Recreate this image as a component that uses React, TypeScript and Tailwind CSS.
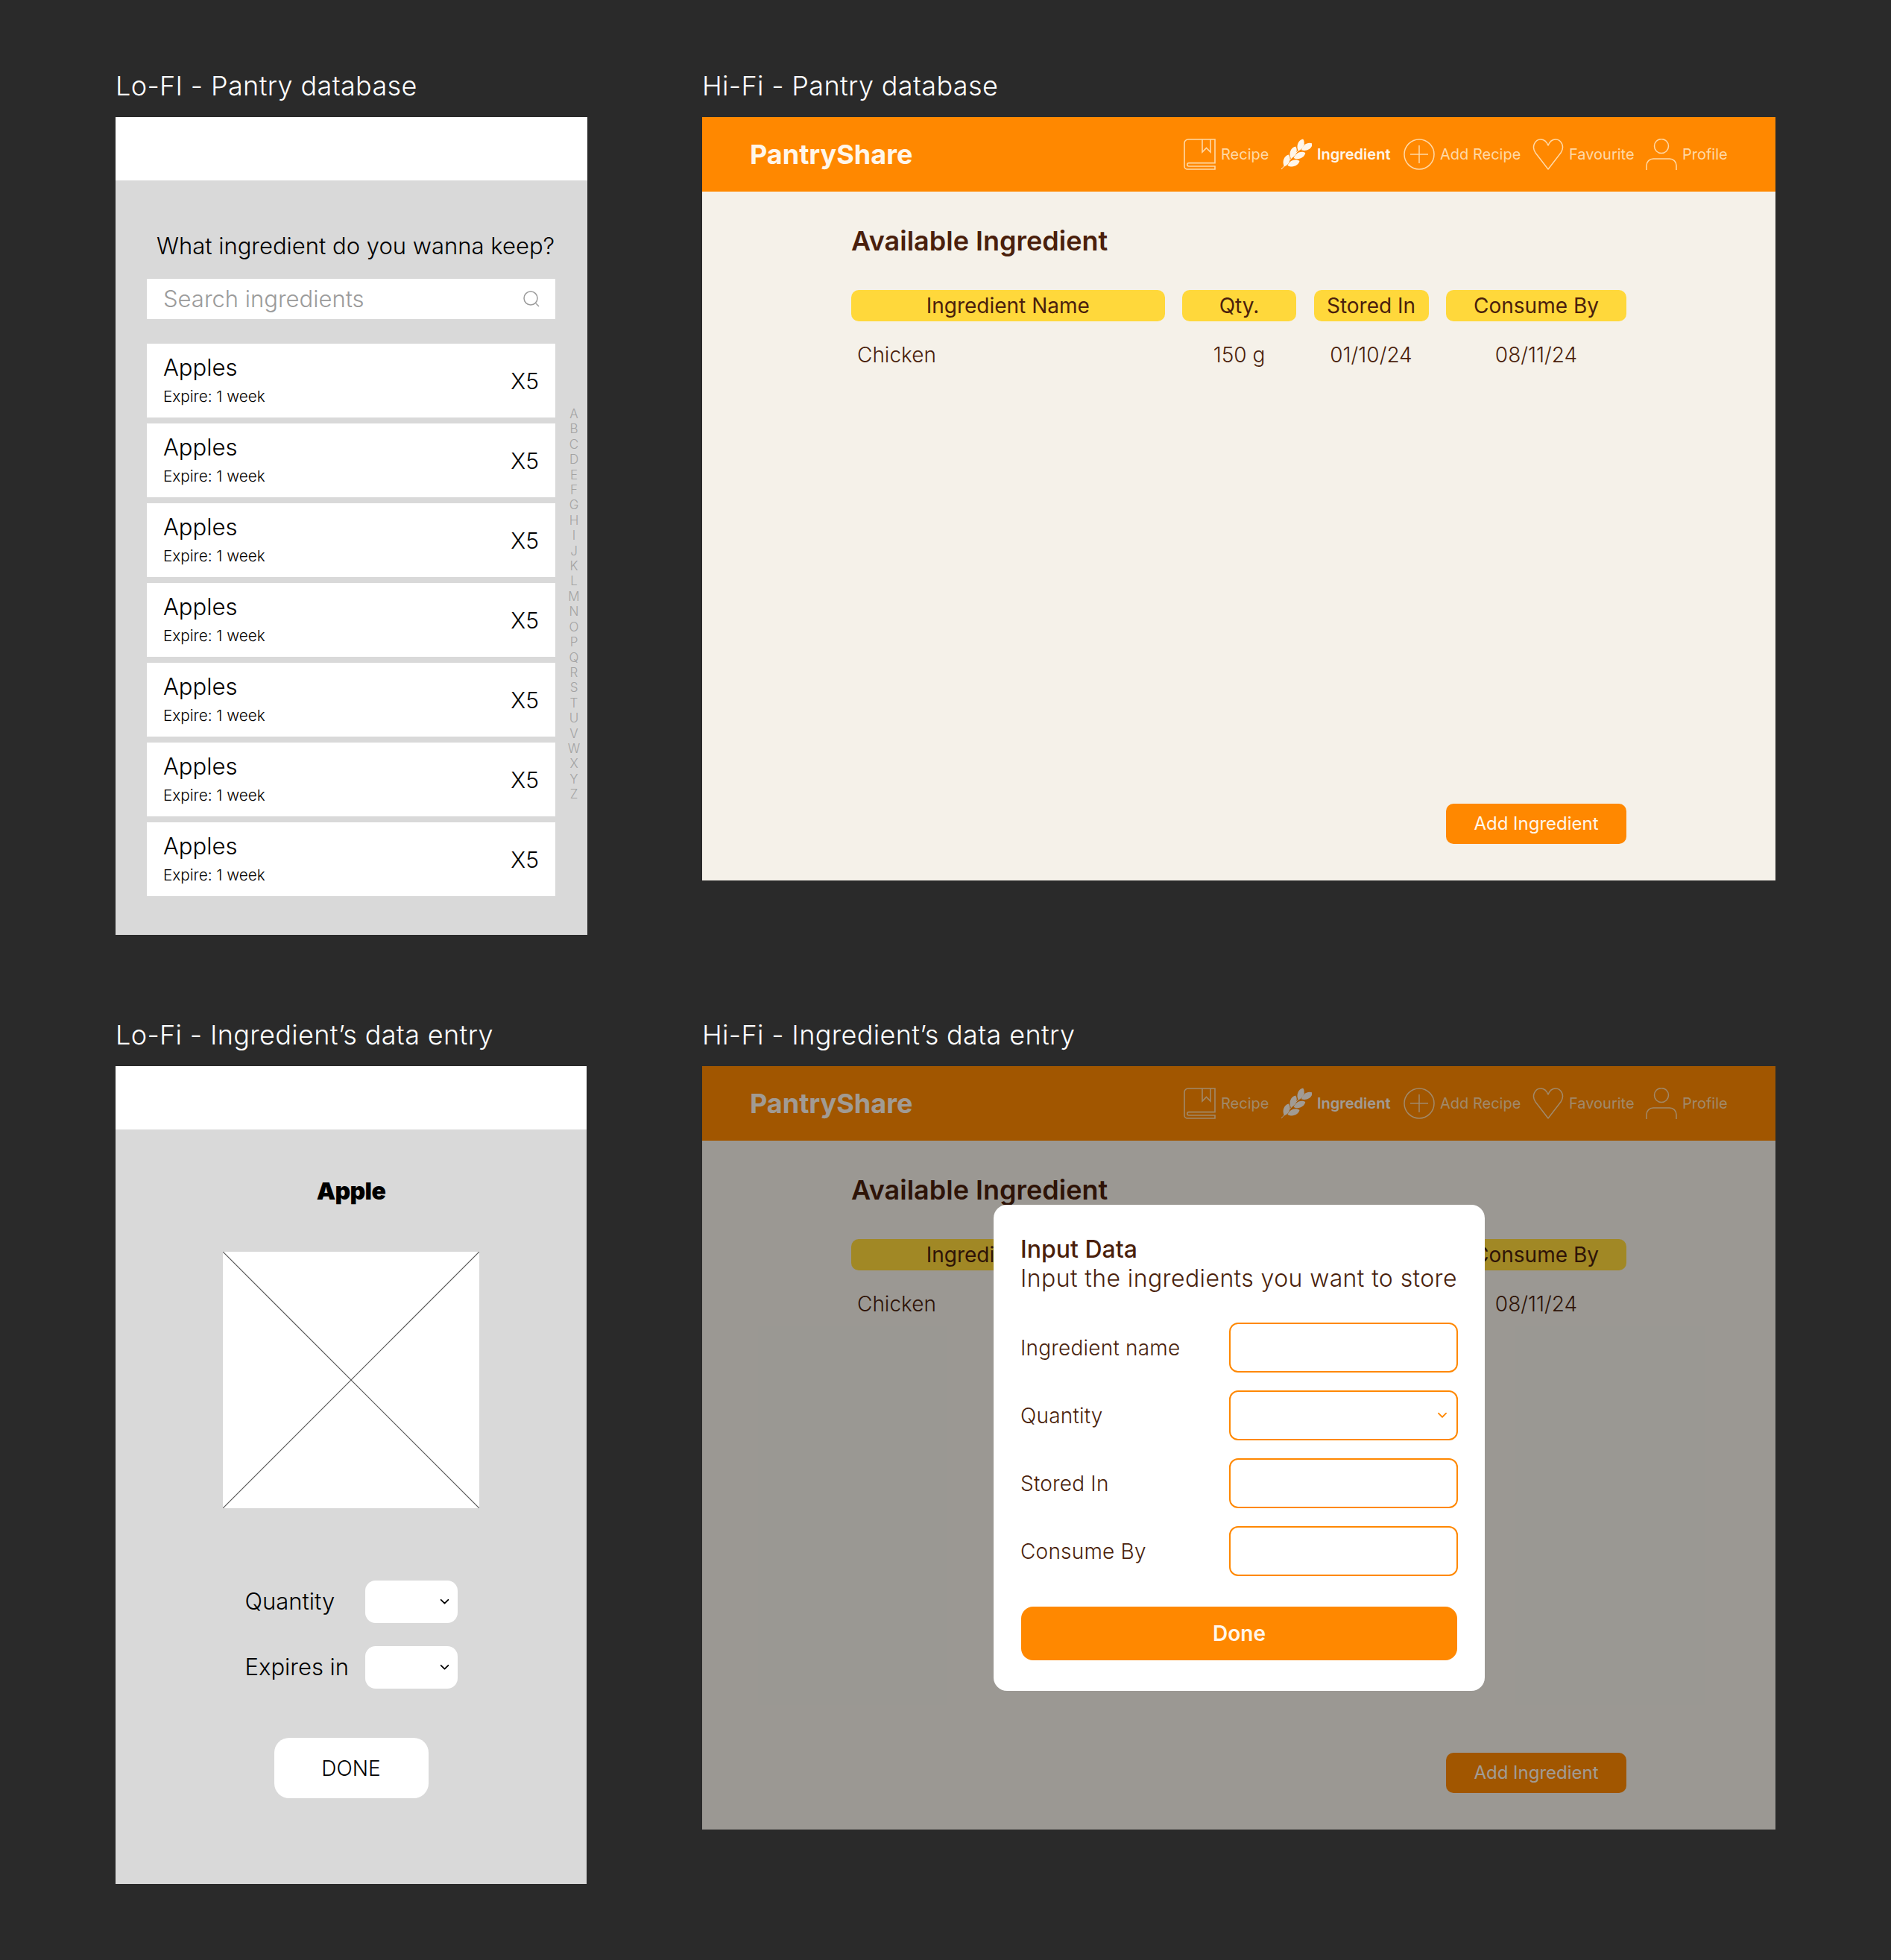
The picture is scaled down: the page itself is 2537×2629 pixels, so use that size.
const rows = Array.from({ length: 7 });
const letters = "ABCDEFGHIJKLMNOPQRSTUVWXYZ".split("");

function Caret({ className }: { className: string }) {
  return (
    <svg viewBox="0 0 12 8" fill="none" className={className}>
      <path d="M1.5 1.5 6 6l4.5-4.5" stroke="currentColor" strokeWidth="1.6" strokeLinecap="round" strokeLinejoin="round" />
    </svg>
  );
}

function BookIcon() {
  return (
    <svg viewBox="0 0 43 42" fill="none" stroke="currentColor" strokeWidth="1.6" className="w-[43px] h-[42px]">
      <path d="M42 1H6a5 5 0 0 0-5 5v31a4 4 0 0 0 4 4h37v-4H7a2.200 2.200 0 0 1 0-4.400h35z" />
      <path d="M25 1v17l5.500-5.500L36 18V1" />
    </svg>
  );
}

function WheatIcon() {
  const leaves = [
    [27, 8.500, 22],
    [35.500, 11, 60],
    [17, 18.500, 22],
    [25.500, 22.500, 66],
    [8, 29.500, 20],
    [17.500, 33, 70],
  ];
  return (
    <svg viewBox="0 0 42 42" className="w-[42px] h-[42px]">
      <path d="M1 41 32 7" stroke="currentColor" strokeWidth="1" />
      {leaves.map(([x, y, r], i) => (
        <path
          key={i}
          d="M0-8.500C5.500-5 5.500 4 0 8.500-5.500 4-5.500-5 0-8.500z"
          fill="currentColor"
          transform={`translate(${x} ${y}) rotate(${r})`}
        />
      ))}
    </svg>
  );
}

function PlusIcon() {
  return (
    <svg viewBox="0 0 42 42" fill="none" stroke="currentColor" strokeWidth="1.5" className="w-[42px] h-[42px]">
      <circle cx="21" cy="21" r="20" />
      <path d="M21 9v24M9 21h24" />
    </svg>
  );
}

function HeartIcon() {
  return (
    <svg viewBox="0 0 42 42" fill="none" stroke="currentColor" strokeWidth="1.5" className="w-[42px] h-[42px]">
      <path d="M21 41 4 19C-2 10 4 1 11 1c5 0 8 3 10 8 2-5 5-8 10-8 7 0 13 9 7 18z" strokeLinejoin="round" />
    </svg>
  );
}

function UserIcon() {
  return (
    <svg viewBox="0 0 42 42" fill="none" stroke="currentColor" strokeWidth="1.5" className="w-[42px] h-[42px]">
      <circle cx="21" cy="10" r="9.500" />
      <path d="M1 42V36a9 9 0 0 1 9-9h22a9 9 0 0 1 9 9v6" />
    </svg>
  );
}

function NavItem({ icon, label, active, width }: { icon: React.ReactNode; label: string; active?: boolean; width: string }) {
  return (
    <div className={`flex items-center gap-[7px] whitespace-nowrap ${width}`}>
      <div className={active ? "text-[#fff6ea]" : "text-[#ffd9a6]"}>{icon}</div>
      <span className={active ? "text-[20px] font-semibold text-[#fff6ea]" : "text-[20px] text-[#ffd9a6]"}>{label}</span>
    </div>
  );
}

function PantryFrame() {
  return (
    <div className="h-[1024px] flex flex-col bg-[#f5f1e9] text-[#4a1f0c]">
      <div className="h-[100px] bg-[#ff8800] flex items-center justify-between pl-[64px] pr-[65px]">
        <div className="text-[36px] font-bold text-[#fff6ea]">PantryShare</div>
        <div className="flex items-center gap-[16px]">
          <NavItem icon={<BookIcon />} label="Recipe" width="w-[114px]" />
          <NavItem icon={<WheatIcon />} label="Ingredient" active width="w-[149px]" />
          <NavItem icon={<PlusIcon />} label="Add Recipe" width="w-[157px]" />
          <NavItem icon={<HeartIcon />} label="Favourite" width="w-[136px]" />
          <NavItem icon={<UserIcon />} label="Profile" width="w-[109px]" />
        </div>
      </div>
      <div className="flex-1 flex flex-col pl-[200px] pr-[200px] pt-[44px] pb-[49px]">
        <h2 className="text-[36px] leading-[44px] font-semibold">Available Ingredient</h2>
        <div className="grid grid-cols-[420.500px_153px_154px_242px] gap-x-[23.500px] mt-[44px] text-[28px]">
          {["Ingredient Name", "Qty.", "Stored In", "Consume By"].map((h) => (
            <div key={h} className="h-[42px] leading-[42px] rounded-[10px] bg-[#ffd83b] text-center">{h}</div>
          ))}
          <div className="pl-[8px] mt-[24px] leading-[42px] font-light">Chicken</div>
          <div className="mt-[24px] leading-[42px] text-center font-light">150 g</div>
          <div className="mt-[24px] leading-[42px] text-center font-light">01/10/24</div>
          <div className="mt-[24px] leading-[42px] text-center font-light">08/11/24</div>
        </div>
        <div className="mt-auto flex justify-end">
          <div className="w-[242px] h-[54px] rounded-[10px] bg-[#ff8800] text-[#fff6ea] text-[24px] flex items-center justify-center">Add Ingredient</div>
        </div>
      </div>
    </div>
  );
}

function FormRow({ label, select }: { label: string; select?: boolean }) {
  return (
    <div className="flex items-center justify-between">
      <span className="text-[28px] font-light tracking-[0.2px]">{label}</span>
      <div className="w-[307px] h-[67px] rounded-[12px] border-2 border-[#ff8800] flex items-center justify-end pr-[12px]">
        {select && <Caret className="w-[14px] h-[9px] text-[#ff8800]" />}
      </div>
    </div>
  );
}

function LofiSelect({ label }: { label: string }) {
  return (
    <div className="flex items-center justify-between">
      <span>{label}</span>
      <div className="w-[124px] h-[57px] bg-white rounded-[14px] flex items-center justify-end pr-[11px]">
        <Caret className="w-[13px] h-[9px] text-black" />
      </div>
    </div>
  );
}

export default function App() {
  return (
    <div className="min-h-[2629px] bg-[#2a2a2a] pl-[155px] pt-[90px] font-['Inter',sans-serif]">
      <div className="grid grid-cols-[633px_1440px] gap-x-[154px]">
        <h1 className="h-[67px] leading-[50px] text-[36px] font-light tracking-[0.36px] text-white">Lo-FI - Pantry database</h1>
        <h1 className="h-[67px] leading-[50px] text-[36px] font-light tracking-[0.36px] text-white">Hi-Fi - Pantry database</h1>

        <div className="h-[1097px] bg-[#d9d9d9] flex flex-col text-black">
          <div className="h-[85px] bg-white" />
          <div className="flex-1 relative pl-[42px]">
            <div className="w-[548px]">
              <p className="text-[31px] leading-[44px] font-light pt-[66px] pl-[13px] whitespace-nowrap">What ingredient do you wanna keep?</p>
              <div className="mt-[22px] h-[54px] bg-white flex items-center justify-between pl-[22px] pr-[20px]">
                <span className="text-[31px] font-light text-[#9b9b9b]">Search ingredients</span>
                <svg viewBox="0 0 24 24" fill="none" stroke="#9b9b9b" strokeWidth="1.5" className="w-[24px] h-[24px]">
                  <circle cx="11" cy="11" r="9" />
                  <path d="m18 18 4 4" />
                </svg>
              </div>
              <div className="mt-[33px] flex flex-col gap-[8px]">
                {rows.map((_, i) => (
                  <div key={i} className="h-[99px] bg-white flex items-center justify-between pl-[22px] pr-[22px]">
                    <div className="pb-[3px]">
                      <div className="text-[31px] leading-[42px] font-light">Apples</div>
                      <div className="mt-[3px] text-[20.700px] leading-[30px] font-light">Expire: 1 week</div>
                    </div>
                    <div className="pt-[2px] text-[30px] font-light">X5</div>
                  </div>
                ))}
              </div>
            </div>
            <div className="absolute left-[600px] top-[303px] w-[30px] flex flex-col items-center text-[#a3a3a3] text-[17px] leading-[20.400px] font-light">
              {letters.map((l) => (
                <span key={l}>{l}</span>
              ))}
            </div>
          </div>
        </div>

        <PantryFrame />

        <h1 className="mt-[113px] h-[63px] leading-[42px] text-[36px] font-light tracking-[0.36px] text-white">Lo-Fi - Ingredient’s data entry</h1>
        <h1 className="mt-[113px] h-[63px] leading-[42px] text-[36px] font-light tracking-[0.36px] text-white">Hi-Fi - Ingredient’s data entry</h1>

        <div className="w-[632px] h-[1097px] bg-[#d9d9d9] flex flex-col items-center text-black">
          <div className="h-[85px] w-full bg-white" />
          <div className="mt-[63px] text-[32px] leading-[40px] font-black tracking-[-0.6px]">Apple</div>
          <div className="mt-[61px] w-[344px] h-[344px] bg-white">
            <svg viewBox="0 0 344 344" className="w-full h-full" fill="none" stroke="#555" strokeWidth="1.2">
              <path d="M0 0 344 344M344 0 0 344" />
            </svg>
          </div>
          <div className="mt-[97px] w-[285px] flex flex-col gap-[31px] font-light text-[31px]">
            <LofiSelect label="Quantity" />
            <LofiSelect label="Expires in" />
          </div>
          <div className="mt-[66px] w-[207px] h-[81px] rounded-[20px] bg-white flex items-center justify-center text-[28px] font-light">DONE</div>
        </div>

        <div className="relative h-[1024px] overflow-hidden">
          <PantryFrame />
          <div className="absolute inset-0 bg-black/37" />
          <div className="absolute left-[391px] top-[186px] w-[659px] h-[652px] rounded-[18px] bg-white px-[36px] pt-[40px] text-[#4a1f0c]">
            <div className="text-[32px] leading-[39px] font-medium">Input Data</div>
            <div className="text-[32px] leading-[39px] font-light tracking-[0.4px] whitespace-nowrap">Input the ingredients you want to store</div>
            <div className="mt-[40px] flex flex-col gap-[24px] w-[587px]">
              <FormRow label="Ingredient name" />
              <FormRow label="Quantity" select />
              <FormRow label="Stored In" />
              <FormRow label="Consume By" />
            </div>
            <div className="mt-[41px] ml-[1px] w-[585px] h-[72px] rounded-[16px] bg-[#ff8800] flex items-center justify-center text-[#fff6ea] text-[28px] font-semibold">Done</div>
          </div>
        </div>
      </div>
    </div>
  );
}
